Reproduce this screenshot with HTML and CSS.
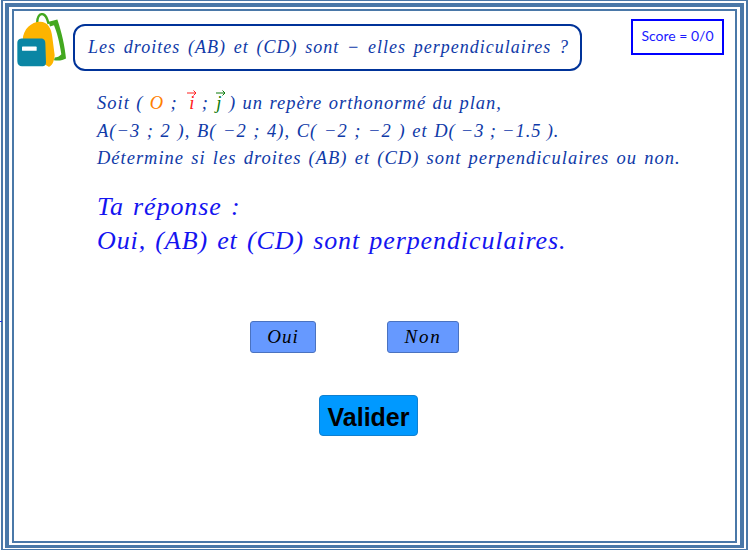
FILE: index.html
```html
<!DOCTYPE html>
<html lang="fr">
<head>
<meta charset="utf-8">
<title>Droites perpendiculaires</title>
<link rel="stylesheet" href="styles.css">
</head>
<body>
<span class="tick"></span>
<div class="frame-outer">
  <div class="frame-mid">
    <div class="frame-inner">
      <header class="top">
        <svg class="bag" viewBox="21 24 147 161" width="49" height="54" aria-hidden="true">
          <path d="M82 58C80 36 88 26 97 27C108 28 112 42 116 56" fill="none" stroke="#43a81f" stroke-width="7"/>
          <path d="M116 50L142 43C155 80 165 125 168 160C160 165 145 168 132 165L134 157C140 157 150 153 154 147C148 110 142 85 132 60L120 64Z" fill="#43a81f"/>
          <path d="M38 104C40 72 64 50 90 50C114 50 124 70 127 96L134 150C132 170 126 182 116 185L60 150Z" fill="#fdb400"/>
          <path d="M22 114C22 104 28 100 38 100H92C102 100 106 106 106 114L108 172C108 180 104 183 98 183H36C28 183 22 178 22 168Z" fill="#0a86a4"/>
          <rect x="36" y="124" width="44" height="13" rx="2" fill="#fff"/>
        </svg>
        <h1 class="question">Les droites (AB) et (CD) sont − elles perpendiculaires ?</h1>
        <div class="score">Score = 0/0</div>
      </header>
      <section class="statement">
        <p class="line-frame">Soit ( <span class="origin">O</span> ; <span class="vec vec-i">i<svg viewBox="0 0 10 8" width="10" height="8" aria-hidden="true"><path d="M0 4H9M6.5 1.5L9 4L6.5 6.5" fill="none" stroke="currentColor"/></svg></span> ; <span class="vec vec-j">j<svg viewBox="0 0 10 8" width="10" height="8" aria-hidden="true"><path d="M0 4H9M6.5 1.5L9 4L6.5 6.5" fill="none" stroke="currentColor"/></svg></span> ) un repère orthonormé du plan,</p>
        <p class="line-points">A(−3 ; 2 ), B( −2 ; 4), C( −2 ; −2 ) et <span class="tight">D( −3 ; −1.5 ).</span></p>
        <p>Détermine si les droites (AB) et (CD) sont perpendiculaires ou non.</p>
      </section>
      <section class="answer">
        <p>Ta réponse :</p>
        <p>Oui, (AB) et (CD) sont perpendiculaires.</p>
      </section>
      <div class="choices">
        <button class="choice choice-yes" type="button">Oui</button>
        <button class="choice choice-no" type="button">Non</button>
      </div>
      <div class="submit-row">
        <button class="submit" type="button">Valider</button>
      </div>
    </div>
  </div>
</div>
</body>
</html>
```
FILE: styles.css
```css
* { box-sizing: border-box; }
html, body { margin: 0; height: 550px; background: #fff; overflow: hidden; }
body { position: relative; font-family: "Liberation Serif", serif; }
p, h1 { margin: 0; font-weight: normal; }

.tick { position: absolute; left: 0; top: 321px; width: 2px; height: 1px; background: #2030e0; }

.frame-outer {
  margin-left: 1px;
  width: 747px;
  height: 550px;
  border: solid #4a78a8;
  border-width: 1px 2px 1px 2px;
  padding: 2px 2px 1px 2px;
}
.frame-mid {
  height: 100%;
  border: solid #4a78a8;
  border-width: 4px 4px 3px 4px;
  padding: 2px 3px 2px 3px;
}
.frame-inner {
  height: 100%;
  border: 2px solid #4a78a8;
  padding: 2px 12px 0 3px;
}

.top { display: flex; align-items: flex-start; }
.bag { flex: none; margin-top: 0; }
.question {
  flex: none;
  width: 509px;
  height: 47px;
  margin: 11px 0 0 7px;
  border: 2px solid #003399;
  border-radius: 12px;
  padding-left: 13px;
  color: #0f3aa8;
  font-size: 18px;
  font-style: italic;
  line-height: 43px;
  letter-spacing: 1px;
  word-spacing: 2.3px;
  white-space: nowrap;
}
.score {
  flex: none;
  width: 93px;
  height: 36px;
  margin: 6px 0 0 49px;
  border: 2px solid #0000ff;
  color: #1a1aff;
  font-family: "Lato", sans-serif;
  font-size: 14px;
  line-height: 30px;
  text-align: center;
}

.statement {
  margin: 19px 0 0 80px;
  color: #0f3aa8;
  font-size: 18.5px;
  font-style: italic;
  line-height: 27.5px;
  letter-spacing: 1px;
  word-spacing: 1.6px;
  white-space: nowrap;
}
.line-frame { word-spacing: 0.8px; }
.line-points { word-spacing: 1px; }
.tight { word-spacing: -0.5px; }
.origin { color: #ff8000; }
.vec { position: relative; display: inline-block; }
.vec svg { position: absolute; top: -1px; }
.vec-i { margin-left: 2px; padding-left: 3px; color: #ff2020; }
.vec-i svg { left: 1px; }
.vec-j { padding-left: 1px; color: #0a7a0a; }
.vec-j svg { left: 1px; }

.answer {
  margin: 17px 0 0 80px;
  color: #1414f0;
  font-size: 26px;
  font-style: italic;
  line-height: 34.5px;
  letter-spacing: 0.9px;
  word-spacing: 1.8px;
  white-space: nowrap;
}

.choices { display: flex; gap: 71px; margin: 62px 0 0 233px; }
.choice {
  height: 32px;
  padding: 0;
  border: 1px solid #4a72c0;
  border-radius: 3px;
  background: #6699ff;
  color: #000;
  font-family: "Liberation Serif", serif;
  font-size: 19px;
  font-style: italic;
  letter-spacing: 1px;
}
.choice-yes { width: 66px; }
.choice-no { width: 72px; letter-spacing: 1.8px; }

.submit-row { margin: 42px 0 0 302px; }
.submit {
  display: block;
  width: 99px;
  height: 41px;
  padding: 4px 0 0;
  border: 1px solid #1080d0;
  border-radius: 4px;
  background: #0099ff;
  color: #000;
  font-family: "Liberation Sans", sans-serif;
  font-size: 25px;
  font-weight: bold;
}
```
